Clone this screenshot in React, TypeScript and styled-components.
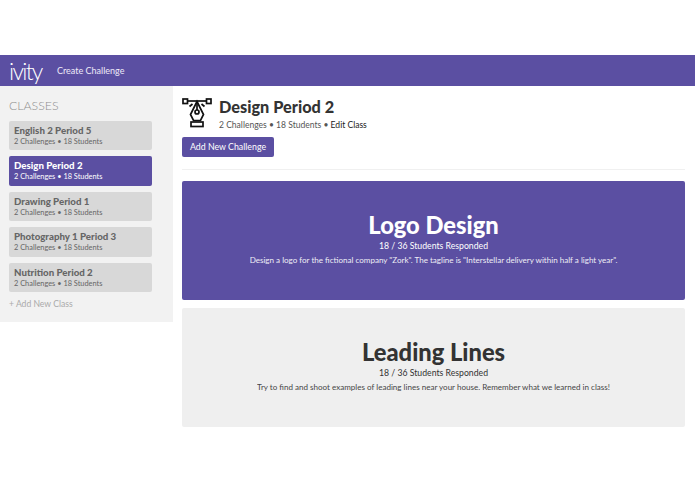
import * as React from 'react';
import styled, { createGlobalStyle } from 'styled-components';

const COLORS = {
  purple: '#5b4fa2',
  grey: '#f2f2f2',
  card: '#d8d8d8',
  text: '#333333',
};

const classes = ['English 2 Period 5', 'Design Period 2', 'Drawing Period 1', 'Photography 1 Period 3', 'Nutrition Period 2'];

const GlobalStyle = createGlobalStyle`
  html, body {
    margin: 0;
    padding: 0;
    background: #fff;
    font-family: Lato, "Open Sans", sans-serif;
  }
`;

const PenIcon = () => (
  <svg width="30" height="31" viewBox="0 0 30 31" fill="none" stroke="#111" strokeWidth="1.7">
    <rect x="1" y="2" width="4.5" height="4.5" />
    <rect x="24.5" y="2" width="4.5" height="4.5" />
    <path d="M5.5 4h19" />
    <path d="M10.5 7 7.5 9.5M19.5 7l3 2.5" />
    <path d="M15 4.5 8.5 17.5 11.5 23.5h7l3-6z" />
    <path d="M15 5v8" />
    <circle cx="15" cy="15" r="2" />
    <rect x="9" y="25" width="12" height="4.5" />
  </svg>
);

const App = () => (
  <>
    <GlobalStyle />
    <Page>
      <NavBar>
        <Logo>ivity</Logo>
        <NavLink>Create Challenge</NavLink>
      </NavBar>
      <Body>
        <Sidebar>
          <SideTitle>CLASSES</SideTitle>
          <ClassList>
            {classes.map((name) => (
              <ClassCard key={name} $active={name === 'Design Period 2'}>
                <ClassName>{name}</ClassName>
                <ClassMeta>2 Challenges • 18 Students</ClassMeta>
              </ClassCard>
            ))}
          </ClassList>
          <AddClass>+ Add New Class</AddClass>
        </Sidebar>
        <Main>
          <Header>
            <PenIcon />
            <HeaderText>
              <Title>Design Period 2</Title>
              <Meta>
                2 Challenges • 18 Students • <EditLink>Edit Class</EditLink>
              </Meta>
            </HeaderText>
          </Header>
          <AddButton>Add New Challenge</AddButton>
          <Divider />
          <Challenge $active>
            <ChallengeTitle>Logo Design</ChallengeTitle>
            <Responded>18 / 36 Students Responded</Responded>
            <Description>Design a logo for the fictional company "Zork". The tagline is "Interstellar delivery within half a light year".</Description>
          </Challenge>
          <Challenge>
            <ChallengeTitle>Leading Lines</ChallengeTitle>
            <Responded>18 / 36 Students Responded</Responded>
            <Description>Try to find and shoot examples of leading lines near your house. Remember what we learned in class!</Description>
          </Challenge>
        </Main>
      </Body>
    </Page>
  </>
);

const Page = styled.div`
  width: 695px;
  height: 494px;
  padding-top: 55px;
  box-sizing: border-box;
  overflow: hidden;
`;

const NavBar = styled.div`
  height: 31px;
  background: ${COLORS.purple};
  display: flex;
  align-items: center;
  padding-left: 9px;
  color: #fff;
`;

const Logo = styled.div`
  font-size: 23px;
  font-weight: 300;
  letter-spacing: -1.7px;
  width: 48px;
  line-height: 28px;
`;

const NavLink = styled.div`
  font-size: 9px;
  line-height: 29px;
  color: #eeeaf8;
`;

const Body = styled.div`
  display: flex;
  align-items: flex-start;
`;

const Sidebar = styled.div`
  width: 173px;
  height: 236px;
  background: ${COLORS.grey};
  padding: 12px 21px 0 9px;
  box-sizing: border-box;
`;

const SideTitle = styled.div`
  font-size: 12.3px;
  line-height: 15px;
  color: #8f8f8f;
  font-weight: 300;
  margin-bottom: 7.5px;
`;

const ClassList = styled.div`
  display: flex;
  flex-direction: column;
  gap: 6px;
`;

const ClassCard = styled.div<{ $active?: boolean }>`
  height: 29.5px;
  border-radius: 2px;
  padding: 3px 5px 0;
  box-sizing: border-box;
  background: ${(p) => (p.$active ? COLORS.purple : COLORS.card)};
  color: ${(p) => (p.$active ? '#fff' : '#666')};
`;

const ClassName = styled.div`
  font-size: 9.7px;
  line-height: 12px;
  font-weight: 900;
  white-space: nowrap;
`;

const ClassMeta = styled.div`
  font-size: 7.4px;
  line-height: 11px;
  white-space: nowrap;
`;

const AddClass = styled.div`
  font-size: 8.6px;
  color: #aaa;
  margin-top: 7px;
`;

const Main = styled.div`
  width: 503px;
  margin-left: 9px;
  padding-top: 11px;
`;

const Header = styled.div`
  display: flex;
  align-items: flex-start;
  gap: 7px;
`;

const HeaderText = styled.div`
  padding-top: 0;
`;

const Title = styled.div`
  font-size: 16.3px;
  line-height: 20px;
  font-weight: 900;
  color: ${COLORS.text};
`;

const Meta = styled.div`
  font-size: 8.55px;
  line-height: 13px;
  margin-top: 1.5px;
  color: #555;
`;

const EditLink = styled.span`
  color: #222;
`;

const AddButton = styled.div`
  width: 92px;
  height: 19.5px;
  margin-top: 5.5px;
  background: ${COLORS.purple};
  border-radius: 2px;
  color: #fff;
  font-size: 8.8px;
  line-height: 19px;
  text-align: center;
`;

const Divider = styled.div`
  height: 1px;
  background: #f0f0f0;
  margin: 12px 0 11.5px;
`;

const Challenge = styled.div<{ $active?: boolean }>`
  height: 119px;
  margin-bottom: 8px;
  border-radius: 2px;
  padding-top: 30.5px;
  box-sizing: border-box;
  text-align: center;
  background: ${(p) => (p.$active ? COLORS.purple : '#efefef')};
  color: ${(p) => (p.$active ? '#fff' : COLORS.text)};
`;

const ChallengeTitle = styled.div`
  font-size: 23.7px;
  line-height: 26px;
  font-weight: 900;
`;

const Responded = styled.div`
  font-size: 8.7px;
  line-height: 14px;
  margin-top: 1px;
`;

const Description = styled.div`
  font-size: 8.05px;
  line-height: 14px;
  opacity: 0.9;
`;

export default App;
